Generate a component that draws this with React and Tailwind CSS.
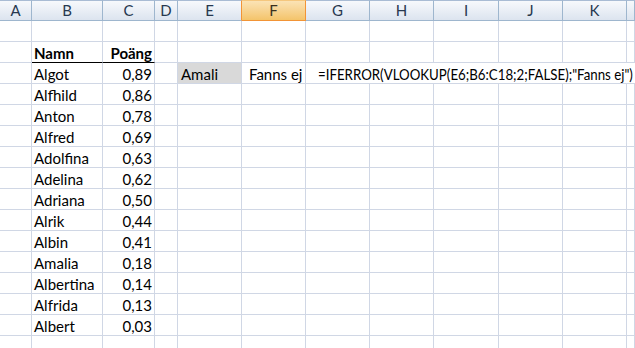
import React from "react";

const cols = ["A", "B", "C", "D", "E", "F", "G", "H", "I", "J", "K", ""];

const data = [
  ["Algot", "0,89"],
  ["Alfhild", "0,86"],
  ["Anton", "0,78"],
  ["Alfred", "0,69"],
  ["Adolfina", "0,63"],
  ["Adelina", "0,62"],
  ["Adriana", "0,50"],
  ["Alrik", "0,44"],
  ["Albin", "0,41"],
  ["Amalia", "0,18"],
  ["Albertina", "0,14"],
  ["Alfrida", "0,13"],
  ["Albert", "0,03"],
];

const cell = "h-[21px] border-r border-b border-[#d0d7e5] flex items-center overflow-visible whitespace-nowrap";

function Empty({ n }) {
  return Array.from({ length: n }).map((_, i) => <div key={i} className={cell} />);
}

export default function App() {
  return (
    <div
      className="w-[635px] h-[348px] overflow-hidden bg-white text-black text-[15px] leading-none"
      style={{ fontFamily: "Lato, 'Liberation Sans', sans-serif" }}
    >
      <div className="grid grid-cols-[32px_71px_52px_23px_64px_64px_64px_64px_65px_64px_64px_1fr]">
        {cols.map((c, i) => (
          <div
            key={"h" + i}
            className={
              c === "F"
                ? "h-[21px] border-t border-b border-r border-[#f29436] border-t-[#f5c77e] bg-linear-to-b from-[#fbe3b5] to-[#f4c46a] flex items-center justify-center text-[#3a3020]"
                : c === "E"
                ? "h-[21px] border-t border-b border-r border-[#9eb6ce] border-t-[#a9bcd4] border-r-[#f29436] bg-linear-to-b from-[#f7f9fc] to-[#dce4ef] flex items-center justify-center text-[#27384f]"
                : "h-[21px] border-t border-b border-r border-[#9eb6ce] border-t-[#a9bcd4] bg-linear-to-b from-[#f7f9fc] to-[#dce4ef] flex items-center justify-center text-[#27384f]"
            }
          >
            {c}
          </div>
        ))}

        {/* empty row */}
        <Empty n={12} />

        {/* header row: Namn / Poäng */}
        <div className={cell} />
        <div className={cell + " border-b-black font-bold pl-[2px] pt-[2px]"}>Namn</div>
        <div className={cell + " border-b-black font-bold justify-end pr-[2px] pt-[2px]"}>Poäng</div>
        <Empty n={9} />

        {data.map(([name, val], r) => (
          <React.Fragment key={name}>
            <div className={cell} />
            <div className={cell + " pl-[2px] pt-[2px]"}>{name}</div>
            <div className={cell + " justify-end pr-[2px] pt-[2px]"}>{val}</div>
            <div className={cell} />
            {r === 0 ? (
              <>
                <div className={cell + " bg-[#d9d9d9] pl-[3px] pt-[2px]"}>Amali</div>
                <div className={cell + " pl-[7px] pt-[2px]"}>Fanns ej</div>
                <div className="col-span-6 h-[21px] border-b border-[#d0d7e5] flex items-center whitespace-nowrap pl-[12px] pt-[2px]">
                  <span className="inline-block origin-left scale-x-[0.885]">
                    =IFERROR(VLOOKUP(E6;B6:C18;2;FALSE);"Fanns ej")
                  </span>
                </div>
              </>
            ) : (
              <Empty n={8} />
            )}
          </React.Fragment>
        ))}

        <Empty n={12} />
      </div>
    </div>
  );
}
